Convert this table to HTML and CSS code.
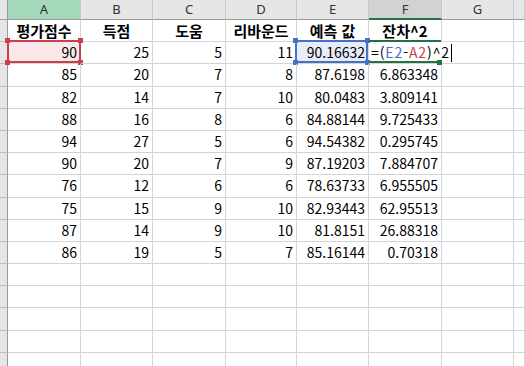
FILE: index.html
```html
<!DOCTYPE html>
<html lang="ko">
<head>
    <meta charset="UTF-8">
    <meta name="viewport" content="width=device-width, initial-scale=1.0">
    <title>잔차 계산</title>
    <link rel="stylesheet" href="styles.css">
</head>
<body>
    <div class="sheet">
        <!-- column headers -->
        <div class="corner"></div>
        <div class="col-head ref-col">A</div>
        <div class="col-head">B</div>
        <div class="col-head">C</div>
        <div class="col-head">D</div>
        <div class="col-head">E</div>
        <div class="col-head active-col">F</div>
        <div class="col-head">G</div>
        <div class="col-head"></div>

        <!-- row 1 -->
        <div class="row-head"></div>
        <div class="cell title">평가점수</div>
        <div class="cell title">득점</div>
        <div class="cell title">도움</div>
        <div class="cell title">리바운드</div>
        <div class="cell title">예측 값</div>
        <div class="cell title">잔차^2</div>
        <div class="cell"></div>
        <div class="cell"></div>

        <!-- row 2 (editing) -->
        <div class="row-head active-row"></div>
        <div class="cell red-cell">90
            <div class="sel sel-red"><i class="h tl"></i><i class="h tr"></i><i class="h bl"></i><i class="h br"></i></div>
        </div>
        <div class="cell">25</div>
        <div class="cell">5</div>
        <div class="cell">11</div>
        <div class="cell blue-cell">90.16632
            <div class="sel sel-blue"><i class="h tl"></i><i class="h tr"></i><i class="h bl"></i><i class="h br"></i></div>
        </div>
        <div class="cell edit-cell">
            <span class="formula">=(<span class="txt-blue">E2</span>-<span class="txt-red">A2</span>)^2</span><span class="caret"></span>
            <div class="sel sel-green"><i class="h br"></i></div>
        </div>
        <div class="cell"></div>
        <div class="cell"></div>
    </div>

    <script>
        const rows = [
            [85, 20, 7, 8, '87.6198', '6.863348'],
            [82, 14, 7, 10, '80.0483', '3.809141'],
            [88, 16, 8, 6, '84.88144', '9.725433'],
            [94, 27, 5, 6, '94.54382', '0.295745'],
            [90, 20, 7, 9, '87.19203', '7.884707'],
            [76, 12, 6, 6, '78.63733', '6.955505'],
            [75, 15, 9, 10, '82.93443', '62.95513'],
            [87, 14, 9, 10, '81.8151', '26.88318'],
            [86, 19, 5, 7, '85.16144', '0.70318']
        ];
        const sheet = document.querySelector('.sheet');

        function addRow(values) {
            let html = '<div class="row-head"></div>';
            for (let i = 0; i < 8; i++) {
                const v = values[i] !== undefined ? values[i] : '';
                html += `<div class="cell">${v}</div>`;
            }
            sheet.insertAdjacentHTML('beforeend', html);
        }

        rows.forEach(r => addRow(r));
        // empty rows below the data
        for (let i = 0; i < 5; i++) {
            addRow([]);
        }
    </script>
</body>
</html>
```

FILE: styles.css
```css
body {
    margin: 0;
    background: #fff;
    overflow: hidden;
    font-family: "Noto Sans CJK KR", "Noto Sans", sans-serif;
    color: #000;
}
.sheet {
    display: grid;
    grid-template-columns: 8px 73px 72px 73px 71px 72px 73px 72px 1fr;
    grid-template-rows: 20px;
    grid-auto-rows: 22.2px;
    width: 525px;
}
.corner {
    background: #e6e6e6;
    border-right: 1px solid #9b9b9b;
    border-bottom: 1px solid #9b9b9b;
    box-sizing: border-box;
}
.col-head {
    background: #e6e6e6;
    border-right: 1px solid #c8c8c8;
    border-bottom: 1px solid #9b9b9b;
    box-sizing: border-box;
    text-align: center;
    font-family: "Noto Sans", sans-serif;
    font-size: 13px;
    line-height: 19px;
    color: #333;
}
.ref-col {
    background: #a4d8ba;
}
.active-col {
    background: #d2d2d2;
    border-bottom: 2px solid #217346;
    line-height: 18px;
}
.row-head {
    background: #e6e6e6;
    border-right: 1px solid #9b9b9b;
    border-bottom: 1px solid #bebebe;
    box-sizing: border-box;
}
.active-row {
    border-right: 2px solid #217346;
    width: 9px;
}
.cell {
    position: relative;
    border-right: 1px solid #d4d4d4;
    border-bottom: 1px solid #d4d4d4;
    box-sizing: border-box;
    padding: 0 3px;
    text-align: right;
    font-size: 14px;
    line-height: 21px;
    white-space: nowrap;
}
.title {
    text-align: center;
    font-weight: bold;
    font-size: 15px;
    padding: 0;
}
.red-cell {
    background: #fae8e9;
}
.blue-cell {
    background: #e6edf8;
}
.edit-cell {
    text-align: left;
    padding-left: 2px;
    border-right-color: transparent;
    overflow: visible;
    z-index: 2;
}
.formula {
    letter-spacing: 0.9px;
}
.txt-blue {
    color: #4472c4;
}
.txt-red {
    color: #c8404f;
}
.caret {
    display: inline-block;
    width: 1px;
    height: 18px;
    background: #000;
    vertical-align: -4px;
    margin-left: 1px;
}
/* range selection boxes */
.sel {
    position: absolute;
    top: -2px;
    bottom: 0;
    border: 2px solid;
}
.sel-red {
    left: -1px;
    right: -1px;
    border-color: #c8404f;
}
.sel-blue {
    left: -2px;
    right: 0;
    border-color: #4472c4;
}
.sel-green {
    left: 0;
    right: 0;
    border-left: none;
    border-right: none;
    border-color: #217346;
}
.h {
    position: absolute;
    width: 5px;
    height: 5px;
}
.sel-red .h { background: #c8404f; }
.sel-blue .h { background: #4472c4; }
.sel-green .h { background: #217346; }
.h.tl { left: -4px; top: -4px; }
.h.tr { right: -4px; top: -4px; }
.h.bl { left: -4px; bottom: -4px; }
.h.br { right: -4px; bottom: -4px; }
.sel-green .h.br { right: -1px; bottom: -4px; }
```
